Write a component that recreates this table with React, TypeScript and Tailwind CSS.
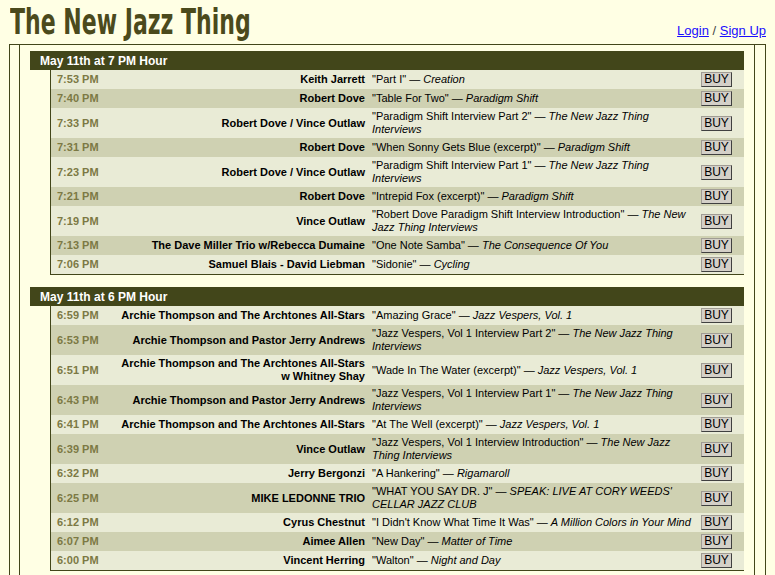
import React from 'react';

type Play = {
  time: string;
  artist: React.ReactNode;
  song: string;
  album: string;
};

const hours: { label: string; plays: Play[] }[] = [
  {
    label: 'May 11th at 7 PM Hour',
    plays: [
      { time: '7:53 PM', artist: 'Keith Jarrett', song: 'Part I', album: 'Creation' },
      { time: '7:40 PM', artist: 'Robert Dove', song: 'Table For Two', album: 'Paradigm Shift' },
      { time: '7:33 PM', artist: 'Robert Dove / Vince Outlaw', song: 'Paradigm Shift Interview Part 2', album: 'The New Jazz Thing Interviews' },
      { time: '7:31 PM', artist: 'Robert Dove', song: 'When Sonny Gets Blue (excerpt)', album: 'Paradigm Shift' },
      { time: '7:23 PM', artist: 'Robert Dove / Vince Outlaw', song: 'Paradigm Shift Interview Part 1', album: 'The New Jazz Thing Interviews' },
      { time: '7:21 PM', artist: 'Robert Dove', song: 'Intrepid Fox (excerpt)', album: 'Paradigm Shift' },
      { time: '7:19 PM', artist: 'Vince Outlaw', song: 'Robert Dove Paradigm Shift Interview Introduction', album: 'The New Jazz Thing Interviews' },
      { time: '7:13 PM', artist: 'The Dave Miller Trio w/Rebecca Dumaine', song: 'One Note Samba', album: 'The Consequence Of You' },
      { time: '7:06 PM', artist: 'Samuel Blais - David Liebman', song: 'Sidonie', album: 'Cycling' },
    ],
  },
  {
    label: 'May 11th at 6 PM Hour',
    plays: [
      { time: '6:59 PM', artist: 'Archie Thompson and The Archtones All-Stars', song: 'Amazing Grace', album: 'Jazz Vespers, Vol. 1' },
      { time: '6:53 PM', artist: 'Archie Thompson and Pastor Jerry Andrews', song: 'Jazz Vespers, Vol 1 Interview Part 2', album: 'The New Jazz Thing Interviews' },
      {
        time: '6:51 PM',
        artist: (
          <>
            Archie Thompson and The Archtones All-Stars
            <br />w Whitney Shay
          </>
        ),
        song: 'Wade In The Water (excerpt)',
        album: 'Jazz Vespers, Vol. 1',
      },
      { time: '6:43 PM', artist: 'Archie Thompson and Pastor Jerry Andrews', song: 'Jazz Vespers, Vol 1 Interview Part 1', album: 'The New Jazz Thing Interviews' },
      { time: '6:41 PM', artist: 'Archie Thompson and The Archtones All-Stars', song: 'At The Well (excerpt)', album: 'Jazz Vespers, Vol. 1' },
      { time: '6:39 PM', artist: 'Vince Outlaw', song: 'Jazz Vespers, Vol 1 Interview Introduction', album: 'The New Jazz Thing Interviews' },
      { time: '6:32 PM', artist: 'Jerry Bergonzi', song: 'A Hankering', album: 'Rigamaroll' },
      { time: '6:25 PM', artist: 'MIKE LEDONNE TRIO', song: 'WHAT YOU SAY DR. J', album: "SPEAK: LIVE AT CORY WEEDS' CELLAR JAZZ CLUB" },
      { time: '6:12 PM', artist: 'Cyrus Chestnut', song: "I Didn't Know What Time It Was", album: 'A Million Colors in Your Mind' },
      { time: '6:07 PM', artist: 'Aimee Allen', song: 'New Day', album: 'Matter of Time' },
      { time: '6:00 PM', artist: 'Vincent Herring', song: 'Walton', album: 'Night and Day' },
    ],
  },
];

function PlayRow({ play, odd }: { play: Play; odd: boolean }) {
  return (
    <div
      className={`grid grid-cols-[60px_254px_330px_47px] items-center py-[2px] leading-[13px] ${
        odd ? 'bg-[#e9ebd6]' : 'bg-[#cfd1b2]'
      }`}
    >
      <div className="pl-[6px] font-bold text-[#7c7944]">{play.time}</div>
      <div className="text-right font-bold text-black whitespace-nowrap">{play.artist}</div>
      <div className="pl-[7px] text-black">
        "{play.song}" — <i>{play.album}</i>
      </div>
      <div className="pl-[6px]">
        <button className="w-[31px] h-[15px] leading-[13px] bg-[#d4d0c8] border border-t-[#a09c94] border-l-[#a09c94] border-r-[#404040] border-b-[#404040] text-[12px] text-black">
          BUY
        </button>
      </div>
    </div>
  );
}

export default function App() {
  return (
    <div className="min-h-[575px] bg-[#ffffe4] font-['Liberation_Sans',Arial,sans-serif] text-[11px]">
      <div className="flex items-end justify-between h-[44px] pl-[10px] pr-[9px]">
        <h1 className="inline-block origin-left scale-x-[0.68] font-['DejaVu_Sans_Condensed',sans-serif] font-bold text-[36px] leading-[40px] text-[#4b4a1c] mb-[2px] whitespace-nowrap">
          The New Jazz Thing
        </h1>
        <div className="text-[13px] mb-[4px] text-[#444]">
          <a href="#" className="text-[#1a0dff] underline">Login</a> /{' '}
          <a href="#" className="text-[#1a0dff] underline">Sign Up</a>
        </div>
      </div>

      <div className="mx-[9px] flex border-l border-t border-r border-[#42461a] min-h-[531px]">
        <div className="w-[10px] border-r border-[#42461a]" />
        <div className="flex-1 px-[10px] pt-[6px] flex flex-col gap-[12px]">
          {hours.map(hour => (
            <div key={hour.label}>
              <div className="h-[19px] bg-[#42461a] pl-[10px] flex items-center text-white font-bold text-[12px]">
                {hour.label}
              </div>
              <div className="ml-[20px] border-l border-b border-[#42461a]">
                {hour.plays.map((play, i) => (
                  <PlayRow key={play.time} play={play} odd={i % 2 === 0} />
                ))}
              </div>
            </div>
          ))}
        </div>
        <div className="w-[11px] border-l border-[#42461a]" />
      </div>
    </div>
  );
}
